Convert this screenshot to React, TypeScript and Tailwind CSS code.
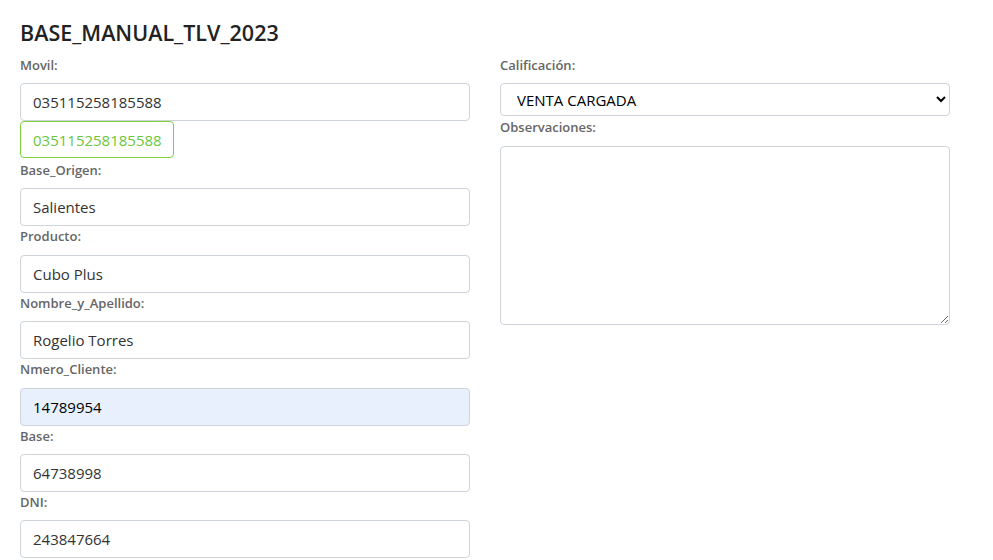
import { useState } from 'react'

const fields = [
  { label: 'Base_Origen:', value: 'Salientes' },
  { label: 'Producto:', value: 'Cubo Plus' },
  { label: 'Nombre_y_Apellido:', value: 'Rogelio Torres' },
  { label: 'Nmero_Cliente:', value: '14789954', autofill: true },
  { label: 'Base:', value: '64738998' },
  { label: 'DNI:', value: '243847664' },
]

function Label({ children }: { children: React.ReactNode }) {
  return (
    <label className="block h-[20px] mb-[8.4px] text-[13px] leading-[20px] font-semibold text-[#666]">
      {children}
    </label>
  )
}

function TextInput({ value, autofill }: { value: string; autofill?: boolean }) {
  return (
    <input
      readOnly
      value={value}
      className={
        'block w-full h-[38px] px-3 rounded border border-[#ced4da] text-[15px] outline-none ' +
        (autofill ? 'bg-[#e8f0fe] text-black' : 'bg-white text-[#333]')
      }
    />
  )
}

export default function App() {
  const [calificacion, setCalificacion] = useState('VENTA CARGADA')

  return (
    <div className="min-h-[560px] bg-white px-5 pt-5 font-['Open_Sans',sans-serif]">
      <h4 className="text-[21.5px] leading-[26px] font-semibold text-[#222] mb-[9px]">BASE_MANUAL_TLV_2023</h4>

      <div className="flex gap-[30px]">
        <div className="w-[450px]">
          <Label>Movil:</Label>
          <TextInput value="035115258185588" />
          <div className="w-[154px] h-[37px] mb-[1.6px] px-3 flex items-center rounded border border-[#7ed33a] text-[15px] text-[#6cc63c]">
            035115258185588
          </div>
          {fields.map((f) => (
            <div key={f.label}>
              <Label>{f.label}</Label>
              <TextInput value={f.value} autofill={f.autofill} />
            </div>
          ))}
        </div>

        <div className="w-[450px]">
          <Label>Calificación:</Label>
          <select
            value={calificacion}
            onChange={(e) => setCalificacion(e.target.value)}
            className="block w-full h-[33px] mb-[1px] px-3 rounded border border-[#ced4da] bg-white text-[15px] text-black outline-none"
          >
            <option>VENTA CARGADA</option>
            <option>NO INTERESA</option>
            <option>VOLVER A LLAMAR</option>
          </select>
          <Label>Observaciones:</Label>
          <textarea className="block w-full h-[179px] mt-[1px] px-3 py-2 rounded border border-[#ced4da] bg-white text-[15px] outline-none" />
        </div>
      </div>
    </div>
  )
}
